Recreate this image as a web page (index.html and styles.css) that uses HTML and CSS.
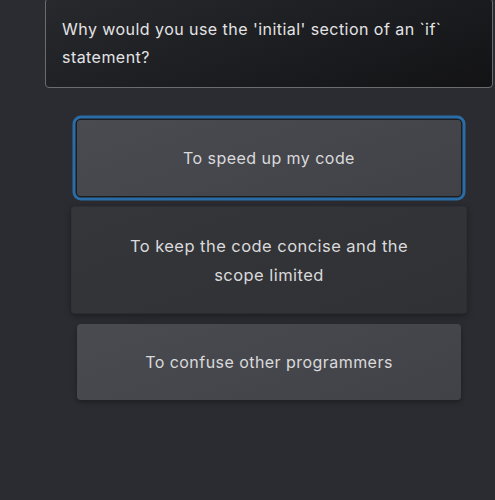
FILE: index.html
```html
<!DOCTYPE html>
<html lang="en">
<head>
<meta charset="utf-8">
<title>Quiz</title>
<link rel="stylesheet" href="styles.css">
</head>
<body>
<main class="quiz">
  <div class="question">Why would you use the 'initial' section of an `if` statement?</div>
  <div class="options">
    <button class="option option--selected">To speed up my code</button>
    <button class="option option--hover">To keep the code concise and the scope limited</button>
    <button class="option">To confuse other programmers</button>
  </div>
</main>
</body>
</html>
```

FILE: styles.css
```css
html, body {
  margin: 0;
  padding: 0;
  background: #2b2c31;
}
body {
  font-family: Inter, "Liberation Sans", Arial, sans-serif;
  font-size: 16px;
  line-height: 28px;
  letter-spacing: 0.45px;
  height: 500px;
  overflow: hidden;
}
.quiz {
  padding: 0 2px 0 45px;
}
.question {
  margin-top: -2px;
  padding: 16px;
  border: 1px solid #6b6c70;
  border-radius: 4px;
  background: linear-gradient(160deg, #28292d 0%, #1b1c1f 60%, #131316 100%);
  color: #e4e4e6;
}
.options {
  margin: 32px 32px 0;
  display: flex;
  flex-direction: column;
  gap: 12px;
}
.option {
  display: block;
  width: 100%;
  padding: 24px 40px;
  border: none;
  border-radius: 4px;
  font: inherit;
  letter-spacing: inherit;
  line-height: 28px;
  color: #dadadc;
  text-align: center;
  background: linear-gradient(160deg, #4a4b50 0%, #414247 100%);
  box-shadow: 0 2px 5px rgba(0, 0, 0, 0.35);
}
.option--selected {
  box-shadow: 0 0 0 1.5px #1c1d21, 0 0 0 4.5px #2a6da6;
}
.option--hover {
  transform: scale(1.03);
  background: linear-gradient(160deg, #35363a 0%, #303135 100%);
  box-shadow: 0 2px 6px rgba(0, 0, 0, 0.35);
}
```
